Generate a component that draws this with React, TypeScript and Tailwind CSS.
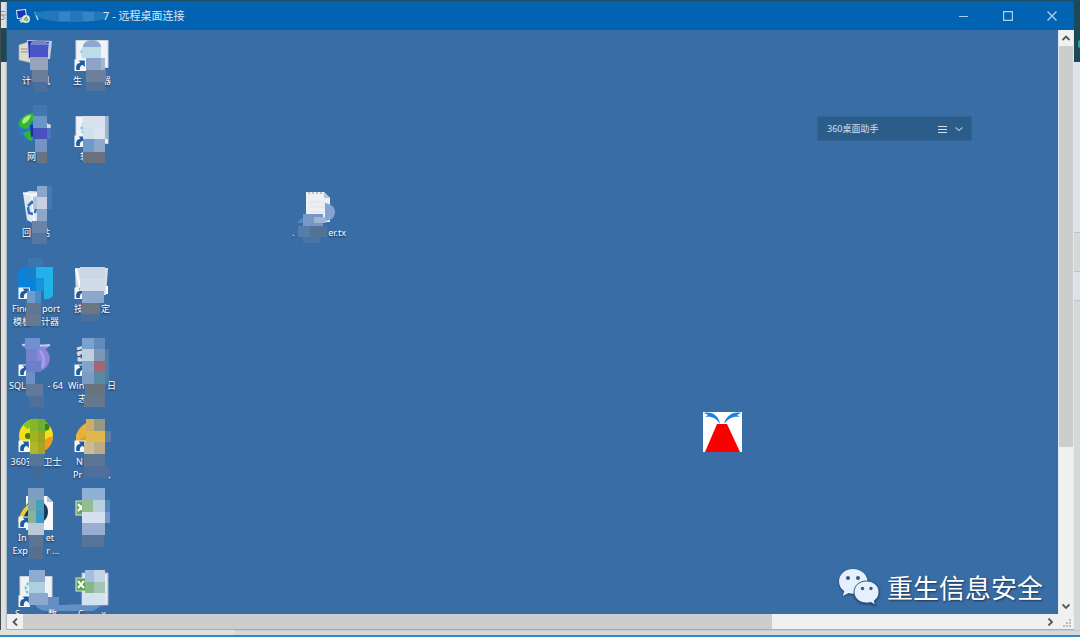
import type { ReactNode } from "react";

type Block = [number, number, number, number, string];

const ui = "font-['Noto_Sans','Noto_Sans_CJK_SC',sans-serif]";

function Blocks({ cells }: { cells: Block[] }) {
  return (
    <g>
      {cells.map(([x, y, w, h, c], i) => (
        <rect key={i} x={x} y={y} width={w} height={h} fill={c} />
      ))}
    </g>
  );
}

function ShortcutMark() {
  return (
    <g>
      <rect x="10.500" y="23.500" width="11.500" height="11.500" fill="#f1f4f8" />
      <path d="M12.500 34c-1.200-4.500.8-7 4-7l-1.700-2.500h6v6.500l-2-1.900c-2 .1-3.200 1.400-3 4.900z" fill="#1f5a9c" />
    </g>
  );
}

function Sheet() {
  return (
    <g>
      <rect x="12" y="4.500" width="32" height="27" fill="#eff2f7" stroke="#cfd2d6" strokeWidth="1" />
      <path d="M21 11a6 6 0 0 0-1 10" fill="none" stroke="#83c4de" strokeWidth="2.500" strokeDasharray="3 1.500" />
    </g>
  );
}

type Line = { width: string; parts: string[] };

function DesktopIcon({
  place,
  name,
  lines,
  cells,
  children,
}: {
  place: string;
  name: string;
  lines: Line[];
  cells: Block[];
  children: ReactNode;
}) {
  return (
    <button
      type="button"
      aria-label={name}
      className={`absolute flex h-[76px] w-14 flex-col items-center justify-start ${place}`}
    >
      <svg viewBox="0 0 56 76" className="absolute inset-0 h-full w-full overflow-visible" aria-hidden="true">
        {children}
      </svg>
      <span className="relative flex flex-col items-center pt-[38px] text-[9px] leading-[13px] text-white [text-shadow:0_1px_2px_#10233d]">
        {lines.map((l, i) => (
          <span key={i} className={`flex shrink-0 justify-between whitespace-nowrap ${l.width}`}>
            {l.parts.map((p, j) => (
              <span key={j}>{p}</span>
            ))}
          </span>
        ))}
      </span>
      <svg viewBox="0 0 56 76" className="absolute inset-0 h-full w-full overflow-visible" aria-hidden="true">
        <Blocks cells={cells} />
      </svg>
    </button>
  );
}

function Icons() {
  return (
    <>
      <DesktopIcon
        place="left-px top-[6px]"
        name="计算机"
        lines={[{ width: "w-7", parts: ["计", "机"] }]}
        cells={[
          [22, 9, 18, 12, "#4954c9"],
          [24, 21, 16, 13, "#98a4b9"],
          [22, 21, 2, 13, "#8fa5cb"],
          [24, 34, 16, 12, "#6c7e97"],
          [26, 46, 13, 10, "#4b6e9f"],
        ]}
      >
        <path d="M11 9l9-3 4 2v19l-13-3z" fill="#dcdccb" stroke="#a9ac9f" strokeWidth=".7" />
        <path d="M13 13h7M13 16h7" stroke="#8c9285" />
        <path d="M19 4l25 1-2 18-22 1z" fill="#c6cde0" />
        <path d="M20 5l21 1-2 15-18 1z" fill="#2433ba" />
        <path d="M36 8l5-1-2 14h-3z" fill="#8da0e6" />
        <path d="M31 24l9 3-10 1z" fill="#dce2ea" />
        <path d="M22 10c0-4 4-6 9-6s9 2 9 6z" fill="#7485c9" />
      </DesktopIcon>
      <DesktopIcon
        place="left-[57px] top-[6px]"
        name="快捷方式"
        lines={[{ width: "w-[38px]", parts: ["生", "器"] }]}
        cells={[
          [18, 11, 19, 11, "#bcdce9"],
          [22, 22, 15, 12, "#8da4c8"],
          [37, 22, 4, 12, "#a3b6d1"],
          [22, 34, 20, 12, "#6c8099"],
          [22, 46, 19, 9, "#547299"],
        ]}
      >
        <Sheet />
        <ShortcutMark />
        <path d="M19 11c0-4 4-7 9-7s9 3 9 7z" fill="#8ea9cf" />
      </DesktopIcon>

      <DesktopIcon
        place="left-px top-[82px]"
        name="网络"
        lines={[{ width: "w-[18px]", parts: ["网"] }]}
        cells={[
          [25, -7, 14, 11, "#3f79b0"],
          [25, 4, 14, 12, "#6b95c7"],
          [25, 16, 14, 11, "#4752bd"],
          [27, 27, 12, 13, "#7493c1"],
          [29, 40, 10, 11, "#6b7380"],
          [39, 16, 4, 11, "#4a73c0"],
        ]}
      >
        <circle cx="24" cy="15" r="14" fill="#2477c9" />
        <path d="M10 13c2-7 8-12 15-12l3 5-5 4-2 6-5 1zM15 21l8-3 3 3-2 8c-4 0-7-4-9-8z" fill="#35b332" />
        <path d="M14 9c2-4 5-6 9-6-1 4-4 8-8 9z" fill="#a9ef7b" />
        <path d="M22 13l19-2 1 11-19 3z" fill="#1930a8" />
        <path d="M39 11l4 2-1 8-3 1z" fill="#d0d7e6" />
      </DesktopIcon>
      <DesktopIcon
        place="left-[57px] top-[82px]"
        name="快捷方式"
        lines={[{ width: "w-6", parts: ["软"] }]}
        cells={[
          [19, 4, 22, 12, "#d8e1ed"],
          [19, 16, 22, 11, "#d1e0eb"],
          [30, 16, 11, 11, "#dce5ef"],
          [19, 27, 11, 13, "#6f99c8"],
          [30, 27, 11, 13, "#8da7cd"],
          [19, 40, 22, 11, "#6b727e"],
          [41, 4, 3, 23, "#9bb5d8"],
        ]}
      >
        <Sheet />
        <ShortcutMark />
      </DesktopIcon>

      <DesktopIcon
        place="left-px top-[158px]"
        name="回收站"
        lines={[{ width: "w-7", parts: ["回", "站"] }]}
        cells={[
          [29, -2, 10, 11, "#8ca6ca"],
          [25, 9, 4, 12, "#b0c4e0"],
          [29, 9, 10, 12, "#c7d1e2"],
          [29, 21, 10, 12, "#8ca7cd"],
          [24, 33, 15, 12, "#6983a9"],
          [24, 45, 15, 11, "#56759f"],
          [39, -2, 5, 23, "#4579b1"],
        ]}
      >
        <path d="M15 5l7-2 15 1-4 30-8 1-6-3z" fill="#dfe6ee" />
        <path d="M15 5l8 2 11-2M24 8l2 25" fill="none" stroke="#fafcff" strokeWidth="1.500" />
        <path d="M20 18l4-4 4 3-2 1M20 19l1 6 4 1M28 19l-1 6" fill="none" stroke="#346bc6" strokeWidth="2.500" />
      </DesktopIcon>

      <DesktopIcon
        place="left-px top-[234px]"
        name="FineReport 模板设计器"
        lines={[
          { width: "w-[48px]", parts: ["Fine", "port"] },
          { width: "w-[46px]", parts: ["模板", "计器"] },
        ]}
        cells={[
          [20, -6, 15, 9, "#3b76b1"],
          [19, 27, 8, 12, "#6d9cca"],
          [27, 27, 6, 12, "#4a8dc6"],
          [18, 39, 15, 11, "#5f7791"],
          [18, 50, 15, 12, "#667990"],
        ]}
      >
        <path d="M10 10c0-4 3-7 8-7h10v32H10z" fill="#0b82d9" />
        <path d="M20 3h15v12H20z" fill="#187fcb" />
        <path d="M28 3h17v28c0 2-3 4-7 4h-2V14h-8z" fill="#20b2e9" />
        <path d="M28 14h8v13h-8z" fill="#1693d9" />
        <ShortcutMark />
      </DesktopIcon>
      <DesktopIcon
        place="left-[57px] top-[234px]"
        name="快捷方式"
        lines={[{ width: "w-9", parts: ["技", "定"] }]}
        cells={[
          [16, 3, 25, 12, "#cbd7e6"],
          [16, 15, 25, 12, "#d1dce8"],
          [18, 27, 22, 12, "#8ca7cb"],
          [17, 39, 19, 11, "#6e7681"],
          [17, 50, 18, 7, "#4c709c"],
        ]}
      >
        <path d="M11 4h33l-2 27H12z" fill="#d8dfe8" />
        <path d="M12 5l5 21M43 22v8" stroke="#ffffff" strokeWidth="2" />
        <ShortcutMark />
      </DesktopIcon>

      <DesktopIcon
        place="left-px top-[311px]"
        name="SQLyog - 64"
        lines={[{ width: "w-[54px]", parts: ["SQL", "- 64"] }]}
        cells={[
          [17, -3, 15, 11, "#6f8fd0"],
          [18, 8, 11, 12, "#7782cf"],
          [18, 20, 15, 11, "#6b7fca"],
          [18, 31, 9, 12, "#6c8fc5"],
          [18, 43, 17, 12, "#64799a"],
          [21, 55, 15, 11, "#507099"],
        ]}
      >
        <path d="M14 5c5-3 22 0 28-1-2 4-5 4-5 4 5 4 6 10 3 16-3 5-10 8-15 5 2-5 1-9-1-14-1-4-4-7-10-10z" fill="#8d85dc" />
        <path d="M14 4c8-2 17 2 28 0" fill="none" stroke="#c3cbf2" strokeWidth="2" />
        <path d="M32 10c4 4 5 11 2 17" fill="none" stroke="#a49deb" strokeWidth="3" />
        <ShortcutMark />
      </DesktopIcon>
      <DesktopIcon
        place="left-[57px] top-[311px]"
        name="Windows 日志"
        lines={[
          { width: "w-[48px]", parts: ["Win", "日"] },
          { width: "w-7", parts: ["志"] },
        ]}
        cells={[
          [18, -3, 12, 11, "#7ba2cb"],
          [30, -3, 11, 11, "#618bbd"],
          [18, 8, 12, 12, "#c0cfdf"],
          [30, 8, 11, 12, "#7c96b5"],
          [18, 20, 12, 11, "#84a4c5"],
          [30, 20, 11, 11, "#a26777"],
          [18, 31, 12, 12, "#7d9cc4"],
          [30, 31, 11, 12, "#5989a3"],
          [21, 43, 20, 12, "#6a7481"],
          [20, 55, 21, 11, "#66788e"],
          [41, 8, 4, 35, "#497fa8"],
        ]}
      >
        <path d="M13 8l8-2M13 13l8-3M14 19h7M15 7v13" fill="none" stroke="#d2d9df" strokeWidth="3" />
        <path d="M13 10l8-2M13 16l8-2" stroke="#35475c" strokeWidth="1.200" />
        <ShortcutMark />
      </DesktopIcon>

      <DesktopIcon
        place="left-px top-[387px]"
        name="360安全卫士"
        lines={[{ width: "w-[51px]", parts: ["360安", "卫士"] }]}
        cells={[
          [22, 2, 8, 12, "#8bb32c"],
          [30, 2, 7, 12, "#6fae2f"],
          [22, 14, 8, 11, "#a0b41e"],
          [30, 14, 7, 11, "#97a51f"],
          [22, 25, 8, 12, "#b0b52c"],
          [30, 25, 7, 12, "#a8a428"],
          [21, 37, 15, 12, "#557797"],
          [23, 49, 13, 12, "#41699a"],
        ]}
      >
        <circle cx="28" cy="19" r="17" fill="#f5df18" />
        <path d="M15 8c6-8 20-9 27 2l-6 6-8-7-9 3z" fill="#78c92b" />
        <path d="M45 19c0 9-8 17-17 17 4-7 6-14 17-17z" fill="#f29825" />
        <circle cx="20" cy="19" r="3" fill="#397f21" />
        <circle cx="38" cy="10" r="3.500" fill="#34851f" />
        <ShortcutMark />
      </DesktopIcon>
      <DesktopIcon
        place="left-[57px] top-[387px]"
        name="Program"
        lines={[
          { width: "w-[32px]", parts: ["N"] },
          { width: "w-[38px]", parts: ["Pr", ","] },
        ]}
        cells={[
          [22, 2, 8, 12, "#d1ad61"],
          [30, 2, 11, 12, "#979a80"],
          [22, 14, 19, 11, "#e1b850"],
          [20, 25, 21, 12, "#c9bd98"],
          [30, 25, 11, 12, "#b9ac87"],
          [20, 37, 21, 12, "#5b7596"],
          [20, 49, 25, 12, "#4f6e99"],
          [41, 14, 6, 11, "#5c80a5"],
        ]}
      >
        <path d="M12 18c3-8 9-13 19-15l6 9-17 9-8 6z" fill="#e7b23c" />
        <path d="M16 22l18-9 7 8-13 7-11-2z" fill="#d6a036" />
        <ShortcutMark />
      </DesktopIcon>

      <DesktopIcon
        place="left-px top-[463px]"
        name="Internet Explorer"
        lines={[
          { width: "w-9", parts: ["In", "et"] },
          { width: "w-[47px]", parts: ["Exp", "r ..."] },
        ]}
        cells={[
          [20, -5, 16, 12, "#7d9fc4"],
          [20, 7, 8, 11, "#82a5a5"],
          [28, 7, 8, 11, "#4b9eba"],
          [20, 18, 8, 12, "#8bb198"],
          [28, 18, 8, 12, "#3e99c6"],
          [20, 30, 16, 12, "#bbc8d8"],
          [21, 42, 14, 12, "#5d7593"],
          [21, 54, 14, 12, "#566f8d"],
        ]}
      >
        <path d="M18 3h21l6 6v28H18z" fill="#f7f8fa" />
        <path d="M39 3v6h6" fill="#b7c4d2" />
        <circle cx="28" cy="19" r="9.500" fill="none" stroke="#163a5d" strokeWidth="5" />
        <path d="M12 29c2-10 9-18 19-23" fill="none" stroke="#e7ce37" strokeWidth="4" />
        <ShortcutMark />
      </DesktopIcon>
      <DesktopIcon
        place="left-[57px] top-[463px]"
        name="表格文件"
        lines={[]}
        cells={[
          [18, -5, 23, 12, "#8fb1d7"],
          [18, 7, 11, 12, "#91bd91"],
          [29, 7, 12, 12, "#b7cfde"],
          [18, 19, 23, 11, "#d5e1ef"],
          [18, 30, 23, 12, "#98afd2"],
          [18, 42, 22, 12, "#577397"],
          [41, 7, 5, 12, "#5185bd"],
          [41, 19, 5, 11, "#6f98ca"],
        ]}
      >
        <rect x="12" y="8" width="12" height="14" fill="#68a765" stroke="#d9e9d8" />
        <path d="M14 11l6 7M20 11l-6 7" stroke="#fff" strokeWidth="2" />
      </DesktopIcon>

      <DesktopIcon
        place="left-px top-[539px]"
        name="快捷方式"
        lines={[{ width: "w-[42px]", parts: ["S", "数"] }]}
        cells={[
          [21, 1, 16, 12, "#90abd0"],
          [21, 13, 16, 11, "#acd0df"],
          [21, 24, 19, 12, "#8ba9d0"],
          [40, 28, 11, 9, "#678ec1"],
        ]}
      >
        <g transform="translate(0 3)">
          <Sheet />
          <ShortcutMark />
        </g>
        <path d="M27 36h28c12 0 20-2 38 1l-8 5H40c-6 0-10-2-13-6z" fill="#6590c4" />
      </DesktopIcon>
      <DesktopIcon
        place="left-[57px] top-[539px]"
        name="表格文件"
        lines={[{ width: "w-7", parts: ["C", "x"] }]}
        cells={[
          [21, 1, 9, 12, "#a2bddd"],
          [30, 1, 11, 12, "#c3d3e5"],
          [21, 13, 9, 11, "#86b88a"],
          [30, 13, 11, 11, "#a5c4b8"],
          [18, 24, 23, 12, "#d4e1ee"],
        ]}
      >
        <path d="M18 4h26v32H18z" fill="#e2eaf3" stroke="#a7b7cd" />
        <rect x="12" y="9" width="14" height="13" fill="#58a454" stroke="#d9e9d8" />
        <path d="M14 12l6 7M20 12l-6 7" stroke="#fff" strokeWidth="2" />
      </DesktopIcon>

      <DesktopIcon
        place="left-[284px] top-[158px]"
        name="文本文件"
        lines={[{ width: "w-[54px]", parts: [".", "er.tx"] }]}
        cells={[
          [12, 26, 20, 12, "#7798c4"],
          [23, 29, 12, 6, "#9eb5d3"],
          [7, 38, 12, 11, "#567da9"],
          [19, 38, 17, 11, "#527398"],
          [12, 49, 17, 6, "#4774a7"],
        ]}
      >
        <path d="M15 4h18l6 6v24H15z" fill="#eceff4" />
        <path d="M33 4v6h6" fill="#b8c4d5" />
        <path d="M17 5h15" stroke="#a9b5c5" strokeDasharray="2 2" strokeWidth="1.500" />
        <path d="M18 14h16M18 19h16M18 24h16" stroke="#e0e5ec" />
        <path d="M34 15c6 1 10 4 10 9s-4 9-10 9z" fill="#83a4d0" />
        <path d="M7 33l11-7v9H7z" fill="#5584bd" />
      </DesktopIcon>
    </>
  );
}

function Chevron({ d }: { d: string }) {
  return (
    <svg viewBox="0 0 8 8" className="h-2 w-2" fill="none" stroke="currentColor" strokeWidth="1.800" aria-hidden="true">
      <path d={d} />
    </svg>
  );
}

function WeChatMark() {
  return (
    <svg viewBox="0 0 42 38" className="h-[38px] w-[42px] drop-shadow-[0_1px_1px_#1c3a60]" aria-hidden="true">
      <path d="M15 1C7 1 1 6.500 1 13.500c0 4 2 7.300 5.200 9.600L5 28l5.500-3c1.500.5 3 .7 4.500.7 8 0 14.500-5.500 14.500-12.200S23 1 15 1z" fill="#e6f0fc" />
      <circle cx="10" cy="10" r="2" fill="#35577f" />
      <circle cx="20" cy="10" r="2" fill="#35577f" />
      <path d="M28.500 13C21.500 13 16 17.800 16 24s5.500 11 12.500 11c1.500 0 3-.2 4.300-.6L37.500 37l-1.200-4.200C39.400 30.700 41 27.500 41 24c0-6.200-5.500-11-12.500-11z" fill="#e6f0fc" stroke="#35577f" strokeWidth="1" />
      <circle cx="24.500" cy="20.500" r="1.700" fill="#35577f" />
      <circle cx="33" cy="20.500" r="1.700" fill="#35577f" />
    </svg>
  );
}

function TitleBar() {
  return (
    <header className="flex h-7 items-center bg-[#0263b2] pl-2 text-[#d5e9fa]">
      <svg viewBox="0 0 16 16" className="h-4 w-4" aria-hidden="true">
        <path d="M1 2l10-1 1 9-10 1z" fill="#e3e8f2" />
        <path d="M2 3l8-1 1 7-8 1z" fill="#1533b9" />
        <path d="M4 12l5-2 2 3-5 2z" fill="#c9d3df" />
        <circle cx="11" cy="11" r="4" fill="#dce6cf" />
        <path d="M9 12l3-3M11 13l2-2" stroke="#5c9c52" strokeWidth="1.200" />
      </svg>
      <svg viewBox="0 0 80 16" className="h-4 w-20" aria-hidden="true">
        <path d="M4 4l3 8" stroke="#b5d4ee" strokeWidth="1.500" />
        <path d="M3 5c15-4 50-2 73-1v4c-2 4-10 6-36 6C25 14 12 12 7 9z" fill="#2378bd" />
        <path d="M28 4h11v9H28zM52 4h11v9H52z" fill="#3884c3" />
      </svg>
      <h1 className="-ml-2 text-[11px] leading-4 whitespace-pre">7 - 远程桌面连接</h1>
      <div className="ml-auto flex h-full text-[#a9d0f2]">
        <button type="button" aria-label="最小化" className="flex w-11 items-center justify-center">
          <svg viewBox="0 0 10 10" className="h-[10px] w-[10px]" stroke="currentColor">
            <path d="M0 5.500h9" />
          </svg>
        </button>
        <button type="button" aria-label="最大化" className="flex w-11 items-center justify-center">
          <svg viewBox="0 0 10 10" className="h-[10px] w-[10px]" fill="none" stroke="currentColor">
            <path d="M.5.5h9v9h-9z" strokeWidth="1.300" />
          </svg>
        </button>
        <button type="button" aria-label="关闭" className="flex w-11 items-center justify-center">
          <svg viewBox="0 0 10 10" className="h-[10px] w-[10px]" stroke="currentColor" strokeWidth="1.400">
            <path d="M.5.5l9 9M9.500.5l-9 9" />
          </svg>
        </button>
      </div>
    </header>
  );
}

export default function App() {
  return (
    <div className={`flex min-h-screen flex-col bg-[#dfe1e2] ${ui}`}>
      <div className="h-[2px] bg-[#1b4c5e]" />
      <div className="flex flex-1">
        <div className="flex w-[7px] flex-col border-l border-[#454b50]">
          <div className="flex h-[26px] items-center bg-[#dde1e3]">
            <svg viewBox="0 0 6 12" className="h-3 w-[6px]" fill="none" stroke="#8d9296" aria-hidden="true">
              <path d="M0 2.500h4M0 6h5M1 6l3 4M0 10.500h3" />
            </svg>
          </div>
          <div className="h-[34px] bg-[#1b4854]" />
          <div className="flex-1 bg-[#e2e0de]" />
        </div>

        <main className="flex min-w-0 flex-1 flex-col shadow-[0_0_2px_#39749f]">
          <TitleBar />
          <div className="flex flex-1">
            <section aria-label="桌面" className="relative min-h-[584px] min-w-0 flex-1 overflow-hidden bg-[#396da5]">
              <Icons />

              <div className="absolute top-[86px] right-[86px] flex h-[25px] w-[155px] items-center rounded-[1px] border border-[#336594] bg-[#2b5c8a] pr-2 pl-[9px] text-[#d4e0eb]">
                <span className="text-[9px] leading-3">360桌面助手</span>
                <button type="button" aria-label="菜单" className="ml-auto">
                  <svg viewBox="0 0 9 8" className="h-2 w-[9px]" stroke="currentColor" strokeWidth="1" aria-hidden="true">
                    <path d="M0 1.500h9M0 4.500h9M0 7.500h9" />
                  </svg>
                </button>
                <button type="button" aria-label="展开" className="ml-2 text-[#a5bed3]">
                  <svg viewBox="0 0 8 8" className="h-2 w-2" fill="none" stroke="currentColor" strokeWidth="1.200" aria-hidden="true">
                    <path d="M.5 2.500L4 5.500l3.500-3" />
                  </svg>
                </button>
              </div>

              <button type="button" aria-label="火山" className="absolute top-[382px] right-[316px]">
                <svg viewBox="0 0 39 40" className="h-10 w-[39px]" aria-hidden="true">
                  <path d="M0 0h39v40H0z" fill="#fff" />
                  <path d="M14 12h10l13 28H2z" fill="#fb0000" />
                  <path d="M1 1c8-2 15 3 16 11C13 6 9 4 2 5l3-2zM38 1c-8-2-15 3-17 11 5-6 9-8 16-7l-3-2z" fill="#1b82e5" />
                </svg>
              </button>

              <div className="absolute right-[15px] bottom-[7px] flex items-center gap-[7px]">
                <WeChatMark />
                <span className="font-['Noto_Sans_CJK_SC',sans-serif] text-[26px] leading-10 whitespace-nowrap text-white [text-shadow:1px_1px_2px_#1c3352]">
                  重生信息安全
                </span>
              </div>
            </section>

            <div className="flex w-4 flex-col border-x border-[#dfe9f2] bg-[#f0f0f0] text-[#555555]">
              <button type="button" aria-label="向上滚动" className="flex h-4 items-center justify-center">
                <Chevron d="M.5 6L4 2.500 7.500 6" />
              </button>
              <div className="grow-[401] basis-0 bg-[#cdcdcd]" />
              <div className="grow-[151] basis-0" />
              <button type="button" aria-label="向下滚动" className="flex h-4 items-center justify-center">
                <Chevron d="M.5 2.500L4 6l3.500-3.500" />
              </button>
            </div>
          </div>
          <div className="flex h-4 border-b border-[#8fb3cc] bg-[#f0f0f0] text-[#555555]">
            <button type="button" aria-label="向左滚动" className="flex w-4 items-center justify-center">
              <Chevron d="M6 .5L2.500 4 6 7.500" />
            </button>
            <div className="grow-[749] basis-0 bg-[#cdcdcd]" />
            <div className="grow-[270] basis-0" />
            <button type="button" aria-label="向右滚动" className="flex w-4 items-center justify-center">
              <Chevron d="M2.500.5L6 4 2.500 7.500" />
            </button>
            <svg viewBox="0 0 16 16" className="h-4 w-4" fill="#bdbdbd" aria-hidden="true">
              <path d="M11 5h2v2h-2zM8 8h2v2H8zM11 8h2v2h-2zM5 11h2v2H5zM8 11h2v2H8zM11 11h2v2h-2z" />
            </svg>
          </div>
        </main>

        <div className="flex w-[6px] flex-col">
          <div className="flex h-[60px] items-center justify-end bg-[#1b4956] pt-6">
            <div className="h-2 w-[2px] rounded-l bg-[#2aa59c]" />
          </div>
          <div className="h-[170px] bg-[#dde3e8]" />
          <div className="h-10 border-y border-[#bfc6ca] bg-[#d3d8da]" />
          <div className="h-[29px] border-b border-[#bfc6ca] bg-[#dce2e8]" />
          <div className="flex-1 bg-[#d4d9d9]" />
        </div>
      </div>
      <div className="flex h-[5px]">
        <div className="w-[235px] bg-[#e0e0df]" />
        <div className="flex-1 border-t border-[#c5cacc] bg-[#d6d9da]" />
      </div>
      <div className="h-[2px] bg-[#2f87c8]" />
    </div>
  );
}
